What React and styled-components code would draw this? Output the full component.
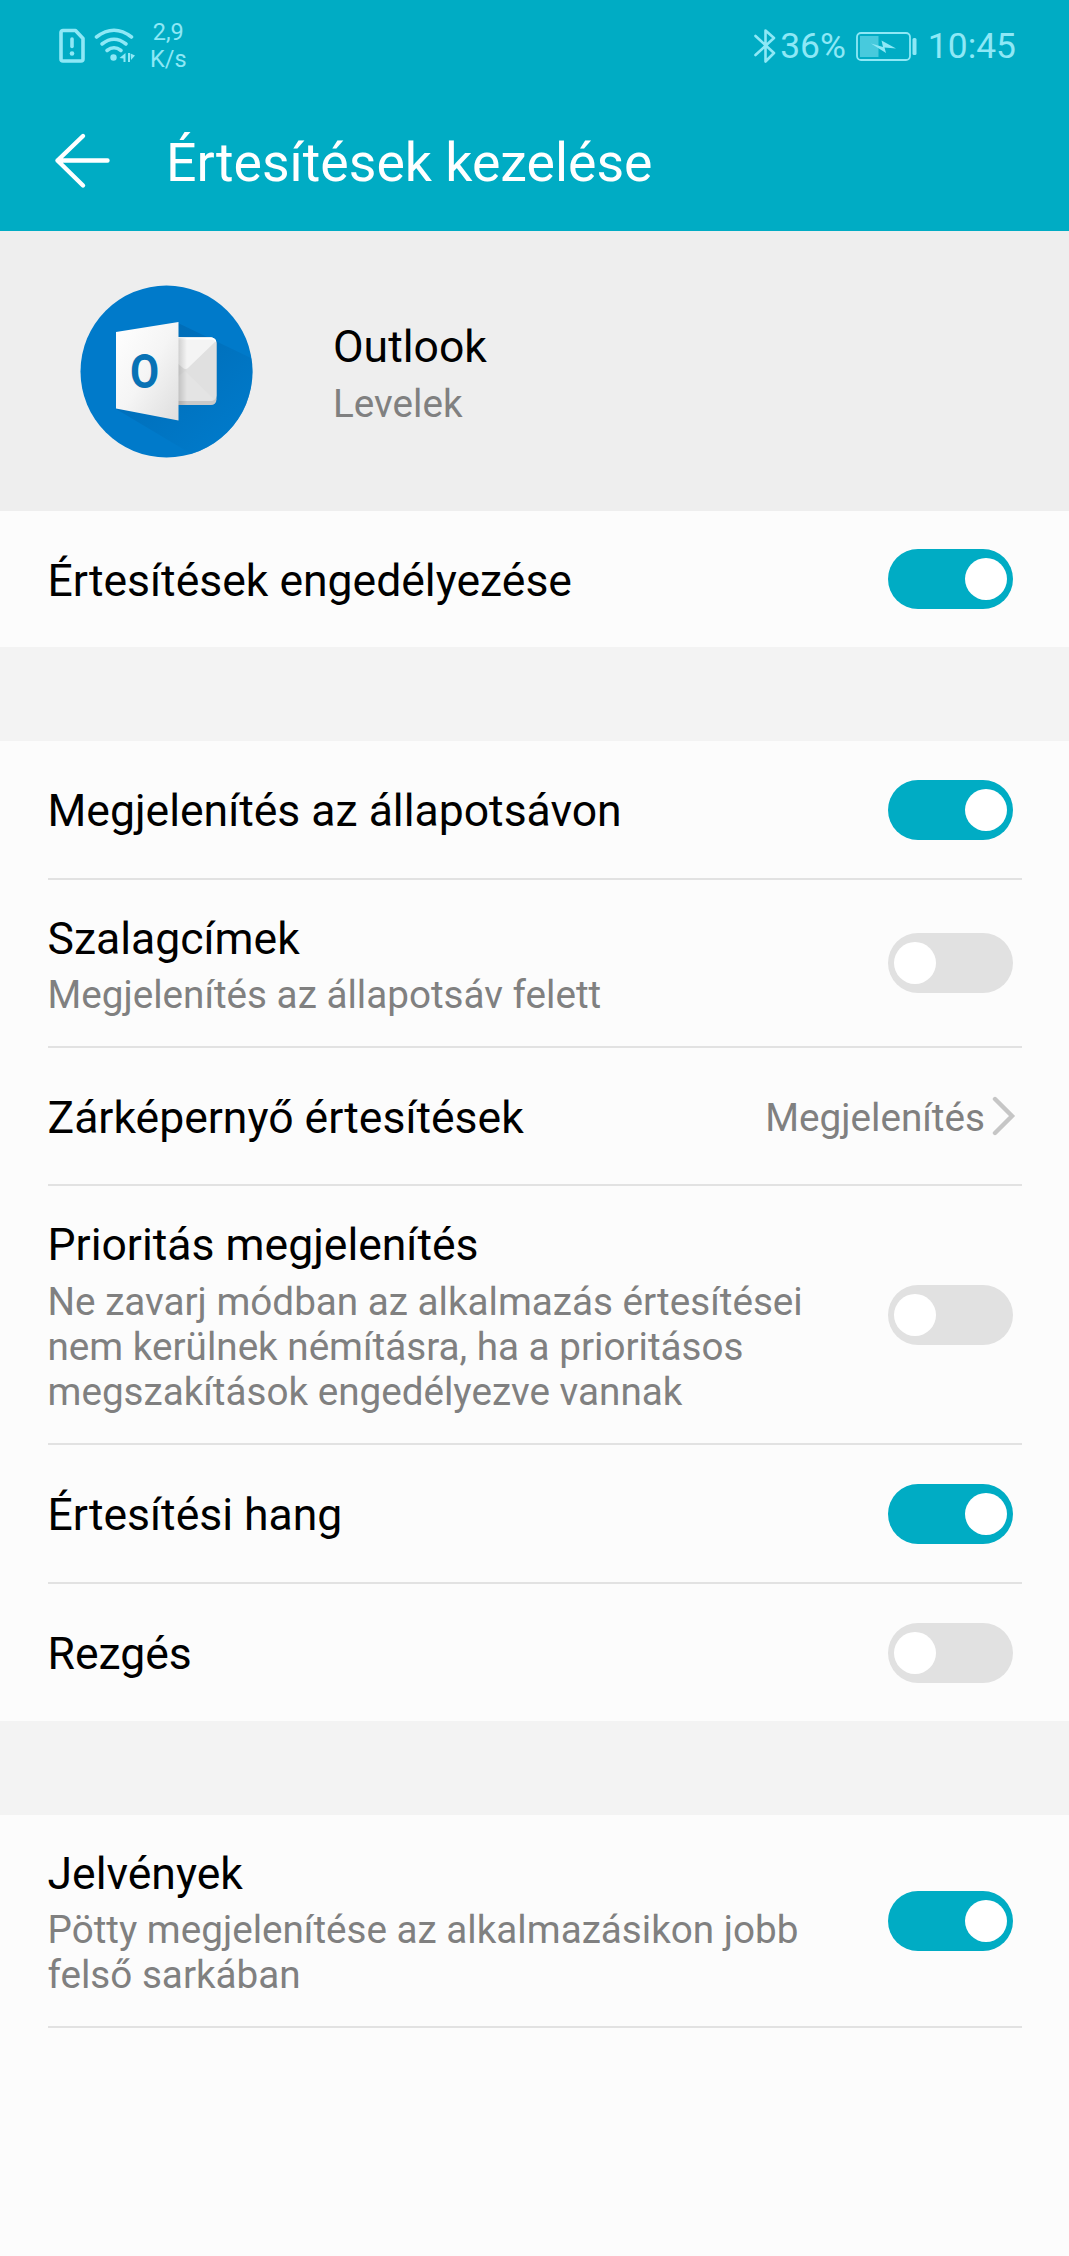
import React, { useState } from 'react';
import styled, { createGlobalStyle } from 'styled-components';

const GlobalStyle = createGlobalStyle`
  * {
    box-sizing: border-box;
  }

  body {
    margin: 0;
    background-color: #fcfcfc;
    font-family: Roboto, 'Liberation Sans', sans-serif;
  }
`;

const Screen = styled.div`
  width: 1069px;
  min-height: 2256px;
  background-color: #fcfcfc;
`;

const Header = styled.header`
  height: 231px;
  background-color: #00acc4;
`;

const StatusBar = styled.div`
  display: flex;
  align-items: center;
  justify-content: space-between;
  height: 91px;
  padding: 0 53px 0 58px;
  color: #8ee8f6;
`;

const StatusGroup = styled.div`
  display: flex;
  align-items: center;
`;

const NetworkSpeed = styled.div`
  margin-left: 14px;
  font-size: 23.5px;
  line-height: 27px;
  text-align: center;
`;

const StatusText = styled.span`
  padding-top: 1px;
  margin-left: ${(props) => props.$gap}px;
  font-size: 35.4px;
  line-height: 42px;
`;

const WifiSvg = styled.svg`
  margin-left: 8px;
`;

const BatteryIcon = styled.svg`
  margin-left: 10px;
`;

const TitleBar = styled.div`
  display: flex;
  align-items: center;
  height: 139px;
  padding: 0 54px;
`;

const BackButton = styled.button`
  display: flex;
  padding: 0;
  border: 0;
  background: none;
  cursor: pointer;
`;

const PageTitle = styled.h1`
  margin: 0 0 0 55px;
  padding-top: 5px;
  color: #fff;
  font-size: 53.6px;
  font-weight: 400;
  line-height: 64px;
`;

const AppInfo = styled.section`
  display: flex;
  align-items: center;
  height: 280px;
  padding-left: 80px;
  background-color: #eeeeee;
`;

const AppText = styled.div`
  margin-left: 80px;
  padding-top: 5px;
`;

const Divider = styled.div`
  height: ${(props) => props.$height}px;
  background-color: #f3f3f3;
`;

const Group = styled.section`
  padding: 0 47px 0 47.5px;
`;

const Row = styled.div`
  display: flex;
  align-items: center;
  justify-content: space-between;
  padding-right: 9px;
  height: ${(props) => props.$height}px;
  border-bottom: ${(props) => (props.$last ? '0' : '2px solid #e2e2e2')};
`;

const RowText = styled.div`
  width: 780px;
  padding-top: ${(props) => (props.$single ? 3 : 4.6)}px;
`;

const RowTitle = styled.div`
  color: #000;
  font-size: 44.5px;
  line-height: 52px;
`;

const RowDescription = styled.div`
  margin-top: 7.4px;
  color: #808080;
  font-size: 38.65px;
  line-height: 45.3px;
`;

const RowValue = styled.div`
  display: flex;
  flex-shrink: 0;
  align-items: center;
  gap: 7px;
  margin-right: -3px;
  color: #808080;
  font-size: 38.7px;
  line-height: 45px;

  span {
    padding-top: 3px;
  }
`;

const Track = styled.button`
  display: flex;
  flex-shrink: 0;
  align-items: center;
  justify-content: ${(props) => (props.$on ? 'flex-end' : 'flex-start')};
  width: 125px;
  height: 60px;
  padding: 0 6px;
  border: 0;
  border-radius: 30px;
  background-color: ${(props) => (props.$on ? '#00acc4' : '#e1e1e1')};
  cursor: pointer;
`;

const Knob = styled.span`
  width: 42px;
  height: 42px;
  border-radius: 50%;
  background-color: #fff;
`;

const Switch = ({ defaultOn, label }) => {
  const [on, setOn] = useState(defaultOn);
  return (
    <Track type="button" role="switch" aria-checked={on} aria-label={label} $on={on} onClick={() => setOn(!on)}>
      <Knob />
    </Track>
  );
};

const SettingRow = ({ title, description, value, on, height, last }) => (
  <Row $height={height} $last={last}>
    <RowText $single={!description}>
      <RowTitle>{title}</RowTitle>
      {description && <RowDescription>{description}</RowDescription>}
    </RowText>
    {value ? (
      <RowValue>
        <span>{value}</span>
        <svg width="24" height="40" viewBox="0 0 24 40" fill="none" stroke="#c6c6c6" strokeWidth="4.4" strokeLinecap="round">
          <path d="M3 3 20 20 3 37" />
        </svg>
      </RowValue>
    ) : (
      <Switch defaultOn={on} label={title} />
    )}
  </Row>
);

const SimIcon = () => (
  <svg width="28" height="36" viewBox="0 0 28 36" fill="none" stroke="currentColor" strokeWidth="3.6" strokeLinejoin="round" strokeLinecap="round">
    <path d="M5 2.5h12.5l7.5 8V31a2 2 0 0 1-2 2H5a2 2 0 0 1-2-2V4.500a2 2 0 0 1 2-2z" />
    <path d="M14 11v7.500" />
    <circle cx="14" cy="25.500" r="2.300" fill="currentColor" stroke="none" />
  </svg>
);

const WifiIcon = () => (
  <WifiSvg width="42" height="36" viewBox="0 0 42 36" fill="none" stroke="currentColor" strokeWidth="3.6" strokeLinecap="round">
    <path d="M2.500 9Q20 -4.500 37.500 9" />
    <path d="M8 16Q20 6.500 32 16" />
    <path d="M13 22.500Q20 17 27 22.500" />
    <circle cx="19.500" cy="29.500" r="3.200" fill="currentColor" stroke="none" />
    <path d="M31.500 25v9h-2v-3.500L25.500 30zM34 25h2v9h-2zM36.500 25.500l4.500 2-4 4.500z" fill="currentColor" stroke="none" />
  </WifiSvg>
);

const OutlookLogo = () => (
  <svg width="173" height="173" viewBox="0 0 173 173">
    <defs>
      <linearGradient id="card" x1="0" y1="0" x2="1" y2="1">
        <stop offset="0" stopColor="#ffffff" />
        <stop offset="0.5" stopColor="#f5f5f5" />
        <stop offset="1" stopColor="#dedede" />
      </linearGradient>
      <linearGradient id="shade" x1="60" y1="50" x2="150" y2="155" gradientUnits="userSpaceOnUse">
        <stop offset="0" stopColor="#0062a8" />
        <stop offset="1" stopColor="#007aca" />
      </linearGradient>
      <linearGradient id="edge" x1="0" y1="0" x2="1" y2="0">
        <stop offset="0" stopColor="#000" stopOpacity="0.16" />
        <stop offset="1" stopColor="#000" stopOpacity="0" />
      </linearGradient>
      <clipPath id="disc">
        <circle cx="86.500" cy="86.500" r="86" />
      </clipPath>
    </defs>
    <circle cx="86.500" cy="86.500" r="86" fill="#007aca" />
    <g clipPath="url(#disc)">
      <path d="M98 38 173 74V173H118L36 124z" fill="url(#shade)" opacity="0.6" />
    </g>
    <path d="M97 52.500h34a5.500 5.500 0 0 1 5.500 5.500v56.500a5.500 5.500 0 0 1-5.500 5.500H97z" fill="#c9c9c9" />
    <path d="M97 52.500h34a5.500 5.500 0 0 1 5.500 5.500v52.500a5.500 5.500 0 0 1-5.500 5.500H97z" fill="#e0e0e0" />
    <path d="M97 92l8-6 29 28q-1.500 2-4 2H97z" fill="#e4e4e4" />
    <path d="M97 52.500h34q3.500 0 5 3.500L108 83q-2.500 2-5 0l-6-5z" fill="#f4f4f4" />
    <path d="M97 52.500h34q3.500 0 5 3.500v1.500q-1.500-3-5-3H97z" fill="#fff" />
    <rect x="98" y="53" width="9" height="67" fill="url(#edge)" />
    <path d="M36 47 98.500 37v98.500L36 123.500z" fill="url(#card)" />
    <text x="0" y="0" transform="translate(64.500 103) scale(.87 1)" textAnchor="middle" fontSize="48.500" fontWeight="700" fill="#0872b5">O</text>
  </svg>
);

const App = () => {
  return (
    <Screen>
      <GlobalStyle />
      <Header>
        <StatusBar>
          <StatusGroup>
            <SimIcon />
            <WifiIcon />
            <NetworkSpeed>
              2,9
              <br />
              K/s
            </NetworkSpeed>
          </StatusGroup>
          <StatusGroup>
            <svg width="24" height="36" viewBox="0 0 24 36" fill="none" stroke="currentColor" strokeWidth="2.6" strokeLinejoin="round" strokeLinecap="round">
              <path d="M2.500 8 21 25 12.500 33.500V2.500L21 10 2.500 27" />
            </svg>
            <StatusText $gap={3}>36%</StatusText>
            <BatteryIcon width="62" height="30" viewBox="0 0 62 30">
              <rect x="1" y="2" width="53" height="27" rx="4" fill="none" stroke="currentColor" strokeWidth="1.8" />
              <path d="M4 5h18.500v21H4z" fill="currentColor" opacity="0.5" />
              <path d="M15 12.500l12 3.500-1.500-6.500L40 17.500 28.500 16.500 30 22z" fill="currentColor" />
              <rect x="56.500" y="7" width="4" height="17" rx="1.500" fill="currentColor" />
            </BatteryIcon>
            <StatusText $gap={10}>10:45</StatusText>
          </StatusGroup>
        </StatusBar>
        <TitleBar>
          <BackButton type="button" aria-label="Vissza">
            <svg width="57" height="58" viewBox="0 0 57 58" fill="none" stroke="#fff" strokeWidth="4.4" strokeLinecap="round" strokeLinejoin="round">
              <path d="M53.500 28.500H3.500M29 4 3.500 28.500 29 53.500" />
            </svg>
          </BackButton>
          <PageTitle>Értesítések kezelése</PageTitle>
        </TitleBar>
      </Header>

      <AppInfo>
        <OutlookLogo />
        <AppText>
          <RowTitle>Outlook</RowTitle>
          <RowDescription>Levelek</RowDescription>
        </AppText>
      </AppInfo>

      <Group>
        <SettingRow title="Értesítések engedélyezése" on={true} height={136} last />
      </Group>
      <Divider $height={94} />
      <Group>
        <SettingRow title="Megjelenítés az állapotsávon" on={true} height={139} />
        <SettingRow title="Szalagcímek" description="Megjelenítés az állapotsáv felett" on={false} height={168} />
        <SettingRow title="Zárképernyő értesítések" value="Megjelenítés" height={138} />
        <SettingRow
          title="Prioritás megjelenítés"
          description="Ne zavarj módban az alkalmazás értesítései nem kerülnek némításra, ha a prioritásos megszakítások engedélyezve vannak"
          on={false}
          height={259}
        />
        <SettingRow title="Értesítési hang" on={true} height={139} />
        <SettingRow title="Rezgés" on={false} height={137} last />
      </Group>
      <Divider $height={94} />
      <Group>
        <SettingRow
          title="Jelvények"
          description="Pötty megjelenítése az alkalmazásikon jobb felső sarkában"
          on={true}
          height={213}
        />
      </Group>
    </Screen>
  );
};

export default App;
